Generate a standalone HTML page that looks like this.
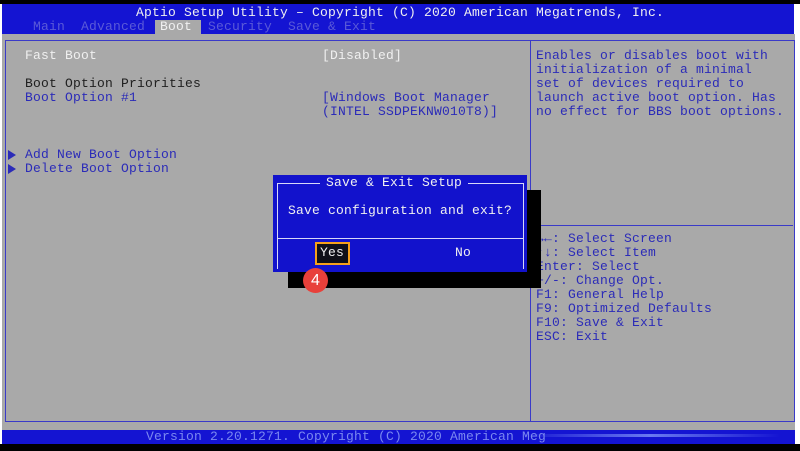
<!DOCTYPE html>
<html><head><style>
html,body{margin:0;padding:0;width:800px;height:451px;overflow:hidden;background:#fff;position:relative}
div{position:absolute}
.t{font-family:"Liberation Mono",monospace;font-size:13px;line-height:14px;letter-spacing:0.2px;white-space:pre}
.w{color:#f0f0f0}.b{color:#2b2bb8}.k{color:#202020}.h{color:#5a5ad8}
</style></head><body>
<div style="left:0;top:0;width:800px;height:4px;background:#000"></div>
<div style="left:2px;top:4px;width:792px;height:30px;background:#1414d2"></div>
<div style="left:2px;top:34px;width:793px;height:396px;background:#a9a9a9"></div>
<div style="left:2px;top:430px;width:793px;height:14px;background:#1414d2"></div>
<div style="left:0;top:444px;width:800px;height:7px;background:#000"></div>
<div style="left:520px;top:434px;width:260px;height:3px;background:linear-gradient(90deg,#1414d2,#6a7af0,#1414d2)"></div>
<div style="left:5px;top:40px;width:788px;height:380px;border:1px solid #3a3ac8;box-sizing:content-box"></div>
<div style="left:530px;top:40px;width:1px;height:381px;background:#3a3ac8"></div>
<div style="left:531px;top:225px;width:262px;height:1px;background:#3a3ac8"></div>
<div class="t w" style="left:0;width:800px;text-align:center;top:6px">Aptio Setup Utility – Copyright (C) 2020 American Megatrends, Inc.</div>
<div style="left:155px;top:20px;width:46px;height:14px;background:#a9a9a9"></div>
<div class="t h" style="left:33px;top:20px">Main  Advanced</div>
<div class="t w" style="left:160px;top:20px">Boot</div>
<div class="t h" style="left:208px;top:20px">Security  Save &amp; Exit</div>
<div class="t w" style="left:25px;top:49px">Fast Boot</div>
<div class="t w" style="left:322px;top:49px">[Disabled]</div>
<div class="t k" style="left:25px;top:77px">Boot Option Priorities</div>
<div class="t b" style="left:25px;top:91px">Boot Option #1</div>
<div class="t b" style="left:322px;top:91px">[Windows Boot Manager</div>
<div class="t b" style="left:322px;top:105px">(INTEL SSDPEKNW010T8)]</div>
<div style="left:8px;top:150px;width:0;height:0;border-left:8px solid #2b2bb8;border-top:5px solid transparent;border-bottom:5px solid transparent"></div>
<div style="left:8px;top:164px;width:0;height:0;border-left:8px solid #2b2bb8;border-top:5px solid transparent;border-bottom:5px solid transparent"></div>
<div class="t b" style="left:25px;top:148px">Add New Boot Option</div>
<div class="t b" style="left:25px;top:162px">Delete Boot Option</div>
<div class="t b" style="left:536px;top:49px">Enables or disables boot with
initialization of a minimal
set of devices required to
launch active boot option. Has
no effect for BBS boot options.</div>
<div class="t b" style="left:536px;top:232px">→←: Select Screen
↑↓: Select Item
Enter: Select
+/-: Change Opt.
F1: General Help
F9: Optimized Defaults
F10: Save &amp; Exit
ESC: Exit</div>
<div style="left:288px;top:190px;width:253px;height:98px;background:#000"></div>
<div style="left:273px;top:175px;width:254px;height:97px;background:#1212cc"></div>
<div style="left:277px;top:183px;width:245px;height:85px;border:1px solid #d8d8f8;border-bottom:none"></div>
<div style="left:278px;top:238px;width:245px;height:1px;background:#d8d8f8"></div>
<div class="t w" style="left:320px;top:176px;background:#1212cc;padding:0 6px">Save &amp; Exit Setup</div>
<div class="t w" style="left:288px;top:204px">Save configuration and exit?</div>
<div style="left:315px;top:242px;width:31px;height:19px;border:2px solid #f5a01a;background:#101018"></div>
<div class="t w" style="left:320px;top:246px">Yes</div>
<div class="t w" style="left:455px;top:246px">No</div>
<div style="left:303px;top:268px;width:25px;height:25px;border-radius:50%;background:#e8403a;color:#fff;font-family:'Liberation Sans',sans-serif;font-size:16px;line-height:25px;text-align:center">4</div>
<div class="t h" style="left:146px;top:430px;color:#7a88f0">Version 2.20.1271. Copyright (C) 2020 American Meg</div>
</body></html>
